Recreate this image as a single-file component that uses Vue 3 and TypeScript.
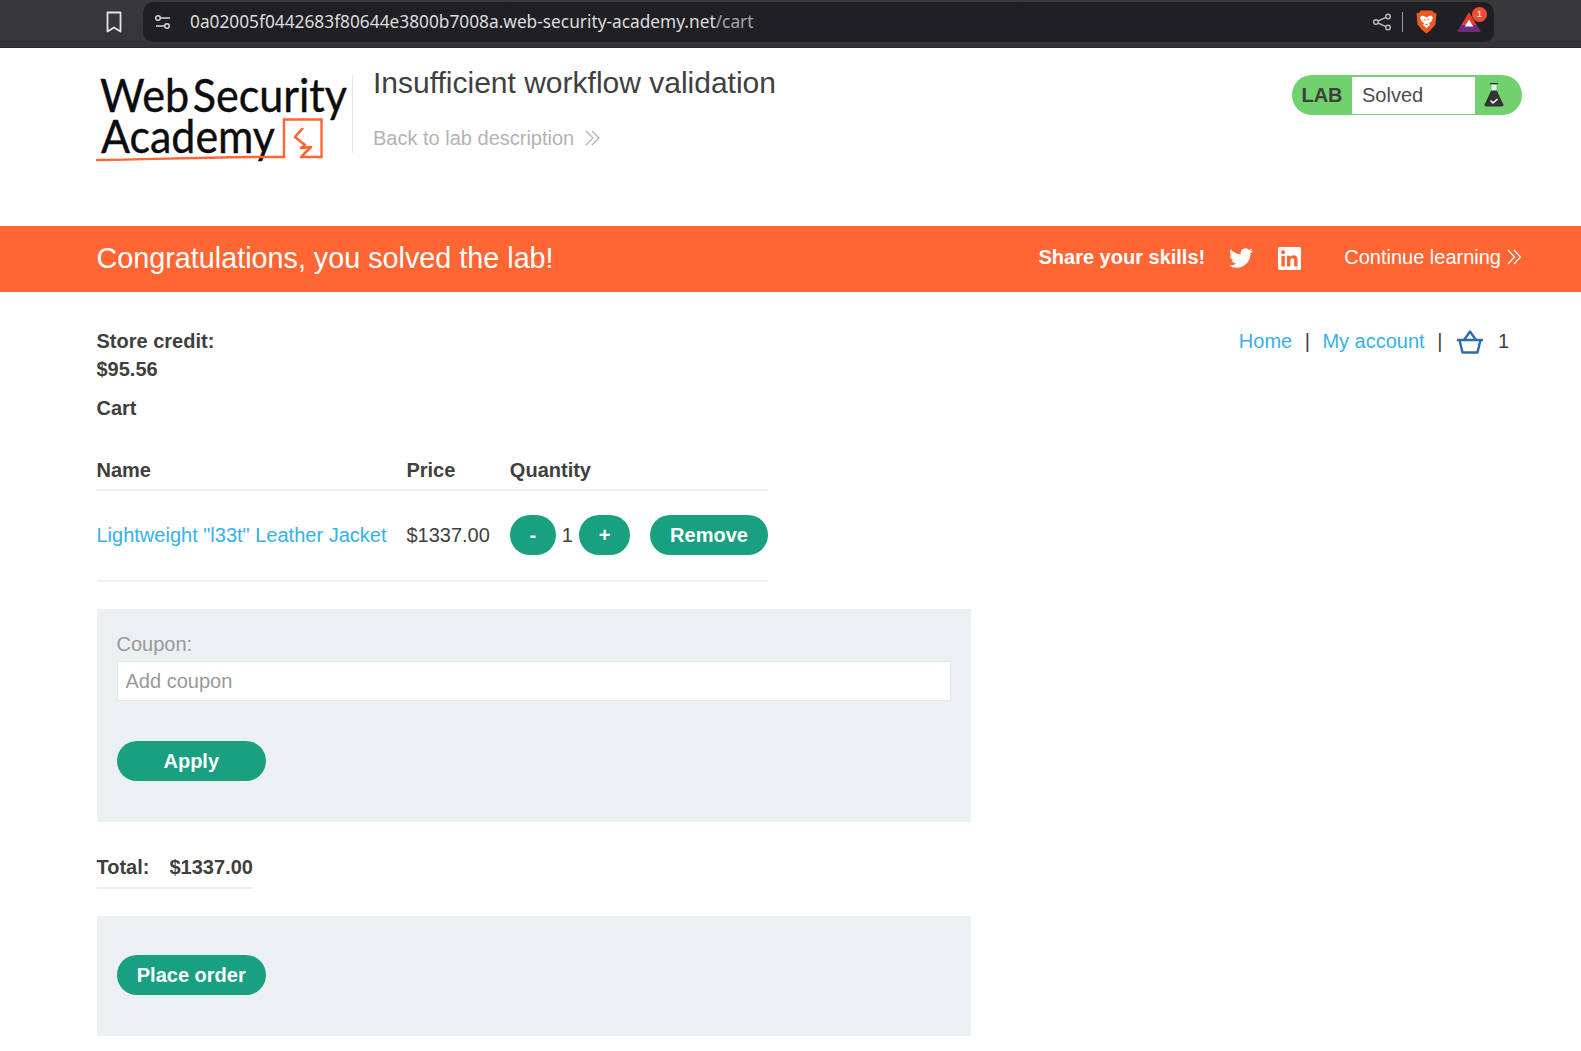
<script setup lang="ts">
const title: string = 'Insufficient workflow validation'
</script>

<template>
  <div class="page">
    <div class="chrome">
      <svg class="bookmark" width="20" height="24" viewBox="0 0 20 24"><path d="M3.500 2.500h13v19l-6.500-4-6.500 4z" fill="none" stroke="#e4e4e6" stroke-width="1.800" stroke-linejoin="round"/></svg>
      <div class="urlbar">
        <svg class="tune" width="18" height="16" viewBox="0 0 18 16"><g fill="none" stroke="#d4d4d6" stroke-width="1.500"><circle cx="4" cy="4" r="2.300"/><path d="M6.500 4h9.500M2 12h9"/><circle cx="13" cy="12" r="2.300"/></g></svg>
        <div class="url"><span class="host">0a02005f0442683f80644e3800b7008a.web-security-academy.net</span><span class="path">/cart</span></div>
        <svg class="share" width="20" height="20" viewBox="0 0 20 20"><g fill="none" stroke="#b8b8bb" stroke-width="1.500"><circle cx="16" cy="4.500" r="2.300"/><circle cx="4" cy="10" r="2.300"/><circle cx="16" cy="15.500" r="2.300"/><path d="M6 9l8-3.600M6 11l8 3.600"/></g></svg>
        <span class="vsep"></span>
        <svg class="brave" width="21" height="24" viewBox="0 0 21 24"><path d="M5 .5h11l2 2.300 2.500.5-1 11-4.500 5.500L10.500 23.500 6 20 1.500 14.500.5 3.300 3 2.800z" fill="#f0591f"/><path d="M6 5.500l3 1 1.500 1 1.500-1 3-1 2 2-1.500 4-2.500 1.500 1 2-3.500 3-3.500-3 1-2L5.500 11.500 4 7.500z" fill="#fff"/><path d="M8 9.500l1.500.5M13 9.500l-1.500.5M9.500 14.500h2" stroke="#f0591f" stroke-width="1" fill="none"/></svg>
        <div class="bat">
          <svg width="24" height="22" viewBox="0 0 24 22"><path d="M12 1L23.500 20.500H.5z" fill="#e8392c"/><path d="M.5 20.500h23L19.500 14H4.500z" fill="#6b2a8f"/><path d="M12 8.500l4.300 7H7.700z" fill="#fff"/></svg>
          <span class="badge">1</span>
        </div>
      </div>
    </div>

    <header class="head">
      <svg class="logo" width="255" height="92" viewBox="0 0 255 92">
        <text class="logo-text" x="3" y="36.500" textLength="247" lengthAdjust="spacingAndGlyphs">Web Security</text>
        <text class="logo-text" x="4" y="78" textLength="174" lengthAdjust="spacingAndGlyphs">Academy</text>
        <path d="M0 85c40 0 110-3 160-3h27V44.500h37.500V82H204" fill="none" stroke="#ff6633" stroke-width="2.400" stroke-linecap="round"/>
        <path d="M206 53l-8 9 10 8-4 3 10-1-9 9" fill="none" stroke="#ff6633" stroke-width="2.600" stroke-linejoin="round"/>
      </svg>
      <div class="divider"></div>
      <div class="title-col">
        <h2 class="title">{{ title }}</h2>
        <a class="back">Back to lab description <svg class="chev" width="18" height="18" viewBox="0 0 18 18"><path d="M2 2l7 7-7 7M8 2l7 7-7 7" fill="none" stroke="#b3b3b3" stroke-width="1.300"/></svg></a>
      </div>
      <div class="lab">
        <span class="lab-tag">LAB</span>
        <span class="lab-status">Solved</span>
        <span class="lab-icon">
          <svg width="20" height="24" viewBox="0 0 20 24"><path d="M7.500 7L.6 21.500Q0 23.500 2 23.500h16q2 0 1.400-2L12.500 7z" fill="#333332"/><path d="M7.500 7.500V1.500h5v6z" fill="#e9e9e9"/><path d="M6 .5h8" stroke="#333332" stroke-width="1.400"/><path d="M6.500 17.500l2.500 2.500 4.500-4" fill="none" stroke="#fff" stroke-width="1.600"/></svg>
        </span>
      </div>
    </header>

    <section class="banner">
      <h4 class="congrats">Congratulations, you solved the lab!</h4>
      <div class="share-skills">
        <strong>Share your skills!</strong>
        <svg class="tw" width="24" height="24" viewBox="0 0 24 24"><path fill="#fff" d="M23.953 4.570a10 10 0 01-2.825.775 4.958 4.958 0 002.163-2.723c-.951.555-2.005.959-3.127 1.184a4.920 4.920 0 00-8.384 4.482C7.690 8.095 4.067 6.130 1.640 3.162a4.822 4.822 0 00-.666 2.475c0 1.710.870 3.213 2.188 4.096a4.904 4.904 0 01-2.228-.616v.060a4.923 4.923 0 003.946 4.827 4.996 4.996 0 01-2.212.085 4.936 4.936 0 004.604 3.417 9.867 9.867 0 01-6.102 2.105c-.390 0-.779-.023-1.170-.067a13.995 13.995 0 007.557 2.209c9.053 0 13.998-7.496 13.998-13.985 0-.210 0-.420-.015-.630A9.935 9.935 0 0024 4.590z"/></svg>
        <svg class="li" width="23" height="23" viewBox="0 0 24 24"><path fill="#fff" d="M20.447 20.452h-3.554v-5.569c0-1.328-.027-3.037-1.852-3.037-1.853 0-2.136 1.445-2.136 2.939v5.667H9.351V9h3.414v1.561h.046c.477-.9 1.637-1.850 3.370-1.850 3.601 0 4.267 2.370 4.267 5.455v6.286zM5.337 7.433c-1.144 0-2.063-.926-2.063-2.065 0-1.138.920-2.063 2.063-2.063 1.140 0 2.064.925 2.064 2.063 0 1.139-.925 2.065-2.064 2.065zm1.782 13.019H3.555V9h3.564v11.452zM22.225 0H1.771C.792 0 0 .774 0 1.729v20.542C0 23.227.792 24 1.771 24h20.451C23.200 24 24 23.227 24 22.271V1.729C24 .774 23.200 0 22.222 0h.003z"/></svg>
      </div>
      <a class="continue">Continue learning <svg class="chev" width="17" height="18" viewBox="0 0 17 18"><path d="M2 2l6.500 7L2 16M8 2l6.500 7L8 16" fill="none" stroke="#fff" stroke-width="1.200"/></svg></a>
    </section>

    <main class="content">
      <div class="top-row">
        <div>
          <p class="credit">Store credit:<br />$95.56</p>
          <p class="cart-label">Cart</p>
        </div>
        <nav class="nav">
          <a>Home</a><span class="pipe">|</span><a>My account</a><span class="pipe">|</span>
          <svg class="basket" width="30" height="26" viewBox="0 0 30 26"><path d="M2 11h26M4.500 11l3 12.500h15l3-12.500M9 11l6-8.500 6 8.500" fill="none" stroke="#2d6cb5" stroke-width="2.400" stroke-linejoin="round"/></svg>
          <span class="count">1</span>
        </nav>
      </div>

      <table class="cart">
        <thead>
          <tr><th class="c-name">Name</th><th class="c-price">Price</th><th>Quantity</th></tr>
        </thead>
        <tbody>
          <tr>
            <td><a>Lightweight "l33t" Leather Jacket</a></td>
            <td>$1337.00</td>
            <td>
              <div class="qty">
                <button class="btn minus">-</button>
                <span class="num">1</span>
                <button class="btn plus">+</button>
                <button class="btn remove">Remove</button>
              </div>
            </td>
          </tr>
        </tbody>
      </table>

      <form class="panel coupon">
        <label class="coupon-label">Coupon:</label>
        <input class="coupon-input" placeholder="Add coupon" />
        <button class="btn wide" type="button">Apply</button>
      </form>

      <div class="total"><span>Total:</span><span>$1337.00</span></div>

      <form class="panel order">
        <button class="btn wide" type="button">Place order</button>
      </form>
    </main>
  </div>
</template>

<style>
html, body { margin: 0; background: #fff; }
</style>

<style scoped>
.page { width: 1581px; height: 1051px; overflow: hidden; font-family: "Liberation Sans", Arial, sans-serif; font-size: 20px; color: #3f3f3e; background: #fff; }
.chrome { height: 48px; box-sizing: border-box; background: linear-gradient(#3a3a3d, #343437); border-bottom: 1px solid #2a2a2c; display: flex; align-items: center; padding-left: 104px; }
.bookmark { margin-right: 19px; margin-top: -4px; }
.urlbar { width: 1351px; height: 40px; margin-top: -4px; background: #202024; border-radius: 10px; display: flex; align-items: center; box-sizing: border-box; padding: 0 13px 0 11px; color: #dcdcde; }
.url { flex: 1; margin-left: 18px; font: 17.300px "Noto Sans", "Open Sans", sans-serif; white-space: nowrap; }
.path { color: #a5a5a9; }
.vsep { width: 1px; height: 20px; background: #9a9a9d; margin: 0 13px 0 10px; }
.brave { margin-right: 20px; }
.bat { position: relative; width: 24px; height: 22px; }
.badge { position: absolute; right: -6px; top: -4px; width: 15px; height: 15px; border-radius: 50%; background: #f04e37; color: #fff; font-size: 9px; line-height: 15px; text-align: center; }

.head { height: 178px; box-sizing: border-box; padding: 27px 59px 0 97px; display: flex; align-items: flex-start; }
.logo { display: block; flex: none; overflow: visible; }
.logo-text { font-family: Lato, "Noto Sans", sans-serif; font-size: 46px; word-spacing: -8px; fill: #0c0c0c; stroke: #0c0c0c; stroke-width: .4px; }
.divider { width: 1px; height: 78px; background: #e6e6e6; margin: 0 20px 0 0; }
.title-col { flex: 1; margin-top: -10px; }
.title { margin: 0; font-size: 30px; font-weight: 400; line-height: 36px; color: #404040; }
.back { display: flex; align-items: center; gap: 10px; margin-top: 25px; color: #b3b3b3; line-height: 24px; }
.lab { width: 230px; height: 40px; border-radius: 20px; background: #70d16d; display: flex; align-items: stretch; overflow: hidden; }
.lab-tag { width: 60px; text-align: center; line-height: 41px; font-weight: 700; box-sizing: border-box; }
.lab-status { width: 123px; margin: 2px 0 1px; background: #fff; box-sizing: border-box; padding-left: 10px; line-height: 36px; color: #4d4d4d; }
.lab-icon { flex: 1; display: flex; align-items: center; justify-content: flex-start; padding-left: 9px; }

.banner { height: 66px; box-sizing: border-box; padding: 0 58px 2px 96.500px; background: #ff6633; color: #fff; display: flex; align-items: center; }
.congrats { flex: 1; margin: 0; font-size: 28.750px; font-weight: 400; }
.share-skills { display: flex; align-items: center; }
.share-skills strong { font-size: 20px; margin-bottom: 2px; }
.tw { margin: 0 0 0 24px; }
.li { margin: 0 0 0 25px; }
.continue { display: flex; align-items: center; gap: 5px; margin-left: 43px; margin-bottom: 2px; }

.content { padding: 35px 72px 0 96.500px; }
.top-row { display: flex; justify-content: space-between; align-items: flex-start; }
.credit { margin: 0; font-weight: 700; line-height: 28px; }
.cart-label { margin: 13px 0 0; font-weight: 700; line-height: 24px; }
.nav { display: flex; align-items: center; height: 28px; }
.nav a, td a { color: #35b1e9; }
.pipe { margin: 0 12.500px; }
.basket { margin: 2px 13px 0 0; }

.cart { border-collapse: collapse; margin-top: 38px; width: 669px; }
.cart th { text-align: left; font-weight: 700; padding: 0 20px 7px 0; height: 24px; line-height: 24px; border-bottom: 2px solid #ebf0f2; }
.cart th:last-child, .cart td:last-child { padding-right: 0; }
.cart td { padding: 24px 20px 25px 0; border-bottom: 2px solid #ebf0f2; white-space: nowrap; }
.qty { display: flex; align-items: center; }
.btn { border: 0; height: 40px; border-radius: 20px; background: #18a080; color: #fff; font: 700 20px "Liberation Sans", Arial, sans-serif; padding: 0; }
.minus { width: 46px; }
.num { margin: 0 6px; }
.plus { width: 51px; }
.remove { width: 118px; margin-left: 20px; }

.panel { width: 874.500px; background: #ebf0f2; box-sizing: border-box; padding: 0 20px; }
.coupon { height: 213px; margin-top: 27px; padding-top: 23px; display: flex; flex-direction: column; align-items: flex-start; }
.coupon-label { color: #999; line-height: 24px; height: 29px; }
.coupon-input { width: 834.500px; height: 40px; box-sizing: border-box; border: 1px solid #e6e6e6; background: #fff; padding: 0 8px; font: 20px "Liberation Sans", Arial, sans-serif; outline: none; }
.coupon-input::placeholder { color: #999; opacity: 1; }
.wide { width: 149.500px; }
.coupon .wide { margin-top: 40px; }
.total { display: inline-flex; gap: 20px; margin-top: 33px; font-weight: 700; line-height: 24px; padding-bottom: 8px; border-bottom: 2px solid #ebf0f2; vertical-align: top; }
.order { height: 120px; margin-top: 27px; padding-top: 39px; }
</style>
